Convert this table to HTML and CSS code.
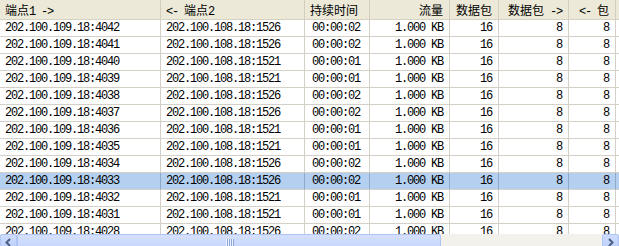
FILE: index.html
```html
<!DOCTYPE html>
<html>
<head>
<meta charset="utf-8">
<link rel="stylesheet" href="styles.css">
</head>
<body>
<div class="view">
  <div class="grid">
    <div class="hc"><span class="cj">端点</span><span class="a">1 -&gt;</span></div>
    <div class="hc"><span class="a">&lt;- </span><span class="cj">端点</span><span class="a">2</span></div>
    <div class="hc"><span class="cj">持续时间</span></div>
    <div class="hc r"><span class="cj">流量</span></div>
    <div class="hc r"><span class="cj">数据包</span></div>
    <div class="hc r"><span class="cj">数据包</span><span class="a"> -&gt;</span></div>
    <div class="hc r"><span class="a">&lt;- </span><span class="cj">包</span></div>
    <div class="hc end"></div>

    <div class="c">202.100.109.18:4042</div><div class="c">202.100.108.18:1526</div><div class="c">00:00:02</div><div class="c r">1.000 KB</div><div class="c r">16</div><div class="c r">8</div><div class="c r">8</div><div class="c end"></div>
    <div class="c">202.100.109.18:4041</div><div class="c">202.100.108.18:1526</div><div class="c">00:00:02</div><div class="c r">1.000 KB</div><div class="c r">16</div><div class="c r">8</div><div class="c r">8</div><div class="c end"></div>
    <div class="c">202.100.109.18:4040</div><div class="c">202.100.108.18:1521</div><div class="c">00:00:01</div><div class="c r">1.000 KB</div><div class="c r">16</div><div class="c r">8</div><div class="c r">8</div><div class="c end"></div>
    <div class="c">202.100.109.18:4039</div><div class="c">202.100.108.18:1521</div><div class="c">00:00:01</div><div class="c r">1.000 KB</div><div class="c r">16</div><div class="c r">8</div><div class="c r">8</div><div class="c end"></div>
    <div class="c">202.100.109.18:4038</div><div class="c">202.100.108.18:1526</div><div class="c">00:00:02</div><div class="c r">1.000 KB</div><div class="c r">16</div><div class="c r">8</div><div class="c r">8</div><div class="c end"></div>
    <div class="c">202.100.109.18:4037</div><div class="c">202.100.108.18:1526</div><div class="c">00:00:02</div><div class="c r">1.000 KB</div><div class="c r">16</div><div class="c r">8</div><div class="c r">8</div><div class="c end"></div>
    <div class="c">202.100.109.18:4036</div><div class="c">202.100.108.18:1521</div><div class="c">00:00:01</div><div class="c r">1.000 KB</div><div class="c r">16</div><div class="c r">8</div><div class="c r">8</div><div class="c end"></div>
    <div class="c">202.100.109.18:4035</div><div class="c">202.100.108.18:1521</div><div class="c">00:00:01</div><div class="c r">1.000 KB</div><div class="c r">16</div><div class="c r">8</div><div class="c r">8</div><div class="c end"></div>
    <div class="c">202.100.109.18:4034</div><div class="c">202.100.108.18:1526</div><div class="c">00:00:02</div><div class="c r">1.000 KB</div><div class="c r">16</div><div class="c r">8</div><div class="c r">8</div><div class="c end"></div>
    <div class="c s">202.100.109.18:4033</div><div class="c s">202.100.108.18:1526</div><div class="c s">00:00:02</div><div class="c r s">1.000 KB</div><div class="c r s">16</div><div class="c r s">8</div><div class="c r s">8</div><div class="c end s"></div>
    <div class="c">202.100.109.18:4032</div><div class="c">202.100.108.18:1521</div><div class="c">00:00:01</div><div class="c r">1.000 KB</div><div class="c r">16</div><div class="c r">8</div><div class="c r">8</div><div class="c end"></div>
    <div class="c">202.100.109.18:4031</div><div class="c">202.100.108.18:1521</div><div class="c">00:00:01</div><div class="c r">1.000 KB</div><div class="c r">16</div><div class="c r">8</div><div class="c r">8</div><div class="c end"></div>
    <div class="c">202.100.109.18:4028</div><div class="c">202.100.108.18:1526</div><div class="c">00:00:02</div><div class="c r">1.000 KB</div><div class="c r">16</div><div class="c r">8</div><div class="c r">8</div><div class="c end"></div>
  </div>
  <div class="hscroll">
    <div class="btn"><svg width="9" height="9" viewBox="0 0 9 9"><path d="M6 1 L2.5 4.5 L6 8" fill="none" stroke="#4d6185" stroke-width="2"/></svg></div>
    <div class="thumb"><div class="grip"><i></i><i></i><i></i><i></i></div></div>
    <div class="track"></div>
    <div class="btn"><svg width="9" height="9" viewBox="0 0 9 9"><path d="M3 1 L6.5 4.5 L3 8" fill="none" stroke="#4d6185" stroke-width="2"/></svg></div>
  </div>
</div>
</body>
</html>
```

FILE: styles.css
```css
html, body {
  margin: 0;
  padding: 0;
  background: #ffffff;
}
.view {
  width: 619px;
  height: 246px;
  overflow: hidden;
  display: flex;
  flex-direction: column;
}
.grid {
  height: 234px;
  flex: none;
  overflow: hidden;
  display: grid;
  grid-template-columns: 161px 144px 65px 80px 49px 70px 47px 3px;
  grid-auto-rows: 17px;
  grid-template-rows: 20px;
  font-family: "Liberation Mono", "Noto Sans CJK SC", monospace;
  font-size: 12px;
  letter-spacing: -1.2px;
  color: #000;
}
.hc {
  box-sizing: border-box;
  background: #ece9d8;
  border-right: 1px solid #d3cfbd;
  border-bottom: 1px solid #d6d2c2;
  padding: 0 5px;
  height: 20px;
  line-height: 19px;
  white-space: nowrap;
  overflow: hidden;
}
.hc .cj {
  font-family: "Noto Sans CJK SC", sans-serif;
  font-size: 12px;
  letter-spacing: 0;
}
.hc .a {
  font-family: "Liberation Mono", monospace;
  font-size: 12px;
  letter-spacing: -1.2px;
  white-space: pre;
}
.hc.end {
  border-right: none;
}
.c {
  box-sizing: border-box;
  border-right: 1px solid #d4d0c8;
  border-bottom: 1px solid #d4d0c8;
  padding: 0 6px 0 5px;
  line-height: 16px;
  white-space: nowrap;
  overflow: hidden;
}
.c:nth-child(8n+3) {
  padding-left: 7px;
}
.r, .hc.r {
  text-align: right;
  padding-right: 6px;
}
.c.end {
  border-right: none;
  padding: 0;
}
.c.s {
  background: #b4cff0;
  border-right-color: #8fa9c9;
}
.hscroll {
  flex: none;
  height: 17px;
  display: flex;
  background: #f3f1ec;
}
.btn {
  width: 17px;
  height: 17px;
  box-sizing: border-box;
  flex: none;
  background: linear-gradient(#cfdcfd, #b9cdfb);
  border: 1px solid #b1c5f4;
  border-radius: 2px;
  display: flex;
  align-items: center;
  justify-content: center;
}
.thumb {
  width: 424px;
  flex: none;
  box-sizing: border-box;
  height: 17px;
  background: linear-gradient(#d4e0fd, #c3d4fc);
  border: 1px solid #b0c4f4;
  border-radius: 2px;
  display: flex;
  align-items: center;
  justify-content: center;
}
.grip {
  display: flex;
  gap: 1px;
  height: 8px;
}
.grip i {
  display: block;
  width: 1px;
  height: 8px;
  background: #eef3ff;
  box-shadow: 1px 0 0 #8ca4dc;
}
.track {
  flex: 1;
}
```
